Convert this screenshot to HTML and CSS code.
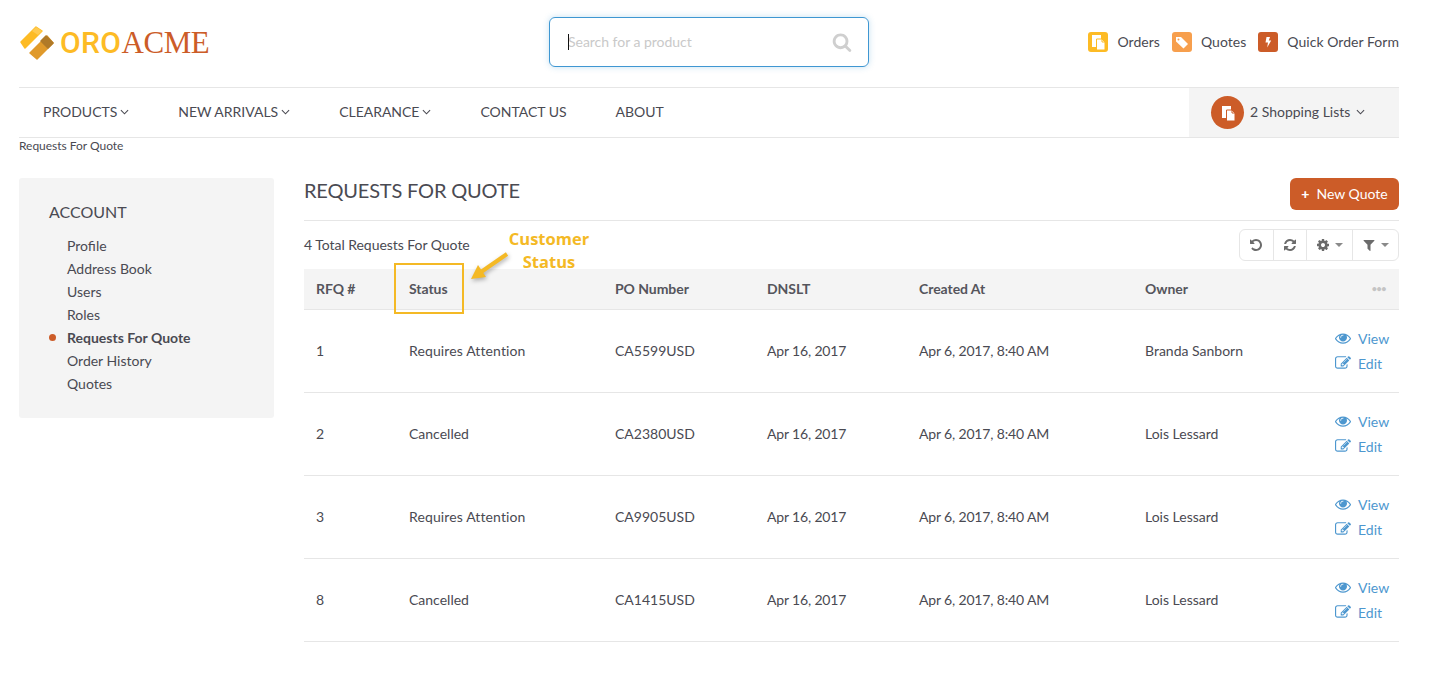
FILE: index.html
```html
<!DOCTYPE html>
<html lang="en">
<head>
<meta charset="utf-8">
<title>Requests For Quote</title>
<link rel="stylesheet" href="styles.css">
</head>
<body>
<svg class="defs" aria-hidden="true">
  <symbol id="i-search" viewBox="0 0 1792 1792"><path d="M1216 832q0-185-131.5-316.5t-316.5-131.5-316.5 131.5-131.5 316.5 131.5 316.5 316.5 131.5 316.5-131.5 131.5-316.5zm512 832q0 52-38 90t-90 38q-54 0-90-38l-343-342q-179 124-399 124-143 0-273.5-55.5t-225-150-150-225-55.5-273.5 55.5-273.5 150-225 225-150 273.5-55.5 273.5 55.5 225 150 150 225 55.5 273.5q0 220-124 399l343 343q37 37 37 90z"/></symbol>
  <symbol id="i-undo" viewBox="0 0 1792 1792"><path d="M1664 896q0 156-61 298t-164 245-245 164-298 61q-172 0-327-72.5t-264-204.5q-7-10-6.5-22.5t8.5-20.5l137-138q10-9 25-9 16 2 23 12 73 95 179 147t225 52q104 0 198.5-40.5t163.5-109.5 109.5-163.5 40.5-198.5-40.5-198.5-109.5-163.5-163.5-109.5-198.5-40.5q-98 0-188 35.5t-160 101.5l137 138q31 30 14 69-17 40-59 40h-448q-26 0-45-19t-19-45v-448q0-42 40-59 39-17 69 14l130 129q107-101 244.5-156.5t284.5-55.5q156 0 298 61t245 164 164 245 61 298z"/></symbol>
  <symbol id="i-refresh" viewBox="0 0 1792 1792"><path d="M1639 1056q0 5-1 7-64 268-268 434.5t-478 166.5q-146 0-282.5-55t-243.5-157l-129 129q-19 19-45 19t-45-19-19-45v-448q0-26 19-45t45-19h448q26 0 45 19t19 45-19 45l-137 137q71 66 161 102t187 36q134 0 250-65t186-179q11-17 53-117 8-23 30-23h192q13 0 22.5 9.5t9.5 22.5zm25-800v448q0 26-19 45t-45 19h-448q-26 0-45-19t-19-45 19-45l138-138q-148-137-349-137-134 0-250 65t-186 179q-11 17-53 117-8 23-30 23h-199q-13 0-22.5-9.5t-9.5-22.5v-7q65-268 270-434.5t480-166.5q146 0 284 55.5t245 156.5l130-129q19-19 45-19t45 19 19 45z"/></symbol>
  <symbol id="i-cog" viewBox="0 0 1792 1792"><path d="M1152 896q0-106-75-181t-181-75-181 75-75 181 75 181 181 75 181-75 75-181zm512-109v222q0 12-8 23t-20 13l-185 28q-19 54-39 91 35 50 107 138 10 12 10 25t-9 23q-27 37-99 108t-94 71q-12 0-26-9l-138-108q-44 23-91 38-16 136-29 186-7 28-36 28h-222q-14 0-24.5-8.5t-11.5-21.5l-28-184q-49-16-90-37l-141 107q-10 9-25 9-14 0-25-11-126-114-165-168-7-10-7-23 0-12 8-23 15-21 51-66.5t54-70.5q-27-50-41-99l-183-27q-13-2-21-12.5t-8-23.5v-222q0-12 8-23t19-13l186-28q14-46 39-92-40-57-107-138-10-12-10-24 0-10 9-23 26-36 98.5-107.5t94.5-71.5q13 0 26 10l138 107q44-23 91-38 16-136 29-186 7-28 36-28h222q14 0 24.5 8.5t11.5 21.5l28 184q49 16 90 37l142-107q9-9 24-9 13 0 25 10 129 119 165 170 7 8 7 22 0 12-8 23-15 21-51 66.5t-54 70.5q26 50 41 98l183 28q13 2 21 12.5t8 23.5z"/></symbol>
  <symbol id="i-filter" viewBox="0 0 1792 1792"><path d="M1595 295q17 41-14 70l-493 493v742q0 42-39 59-13 5-25 5-27 0-45-19l-256-256q-19-19-19-45v-486l-493-493q-31-29-14-70 17-39 59-39h1280q42 0 59 39z"/></symbol>
  <symbol id="i-eye" viewBox="0 0 1792 1792"><path d="M1664 960q-152-236-381-353 61 104 61 225 0 185-131.5 316.5t-316.5 131.5-316.5-131.5-131.5-316.5q0-121 61-225-229 117-381 353 133 205 333.5 326.5t434.5 121.5 434.5-121.5 333.5-326.5zm-720-384q0-20-14-34t-34-14q-125 0-214.5 89.5t-89.5 214.5q0 20 14 34t34 14 34-14 14-34q0-86 61-147t147-61q20 0 34-14t14-34zm848 384q0 34-20 69-140 230-376.5 368.5t-499.5 138.5-499.5-139-376.5-368q-20-35-20-69t20-69q140-229 376.5-368t499.5-139 499.5 139 376.5 368q20 35 20 69z"/></symbol>
  <symbol id="i-edit" viewBox="0 0 1792 1792"><path d="M888 1184l116-116-152-152-116 116v56h96v96h56zm440-720q-16-16-33 1l-350 350q-17 17-1 33t33-1l350-350q17-17 1-33zm80 594v190q0 119-84.5 203.5t-203.5 84.5h-832q-119 0-203.5-84.5t-84.5-203.5v-832q0-119 84.5-203.5t203.5-84.5h832q63 0 117 25 15 7 18 23 3 17-9 29l-49 49q-14 14-32 8-23-6-45-6h-832q-66 0-113 47t-47 113v832q0 66 47 113t113 47h832q66 0 113-47t47-113v-126q0-13 9-22l64-64q15-15 35-7t20 29zm-96-738l288 288-672 672h-288v-288zm444 132l-92 92-288-288 92-92q28-28 68-28t68 28l152 152q28 28 28 68t-28 68z"/></symbol>
  <symbol id="i-docs" viewBox="0 0 20 20"><path d="M4 3h9v12H4z"/><path d="M8.500 7H14l3 3v8H8.500z" stroke="currentColor" stroke-width="1"/><path d="M14 7v3h3" fill="none" stroke="currentColor" stroke-width="1"/></symbol>
  <symbol id="i-chev" viewBox="0 0 10 6"><path d="M1 1l4 4 4-4" fill="none" stroke="currentColor" stroke-width="1.200"/></symbol>
</svg>

<div class="page">
  <header class="top">
    <a class="logo" href="#">
      <svg class="logo-mark" viewBox="0 0 36 36" aria-hidden="true">
        <g stroke-linejoin="round" stroke-width="1.500">
          <path d="M11 28L28 11l6 7-16 16z" fill="#e09a2b" stroke="#e09a2b"/>
          <path d="M27 11l7 7-5 5-7-7z" fill="#b07a28" stroke="#b07a28"/>
          <path d="M17 2L2 17l4 6L23 6z" fill="#fdbb25" stroke="#fdbb25"/>
          <path d="M17 2l6 4-4 4-6-4z" fill="#ffca50"/>
        </g>
      </svg>
      <span class="logo-text"><span class="logo-oro">ORO</span><span class="logo-acme">ACME</span></span>
    </a>
    <form class="search">
      <span class="caret"></span>
      <span class="search-ph">Search for a product</span>
      <svg class="search-icon"><use href="#i-search"/></svg>
    </form>
    <nav class="quick">
      <a class="quick-link" href="#"><span class="q-icon q-yellow"><svg viewBox="0 0 20 20"><use href="#i-docs"/></svg></span>Orders</a>
      <a class="quick-link" href="#"><span class="q-icon q-peach"><svg viewBox="0 0 20 20"><path d="M4 5h5l7 7-4.500 4.500-7.500-7z"/><circle cx="6.500" cy="7.500" r="1" fill="#f79f4d"/></svg></span>Quotes</a>
      <a class="quick-link" href="#"><span class="q-icon q-rust"><svg viewBox="0 0 20 20"><path d="M8.500 5h3.500l-1.200 3.500h2.400l-4 7 .8-5H7.500z"/></svg></span>Quick Order Form</a>
    </nav>
  </header>

  <nav class="mainnav">
    <ul class="menu">
      <li class="menu-item">Products<svg class="chev"><use href="#i-chev"/></svg></li>
      <li class="menu-item">New Arrivals<svg class="chev"><use href="#i-chev"/></svg></li>
      <li class="menu-item">Clearance<svg class="chev"><use href="#i-chev"/></svg></li>
      <li class="menu-item">Contact Us</li>
      <li class="menu-item">About</li>
    </ul>
    <div class="lists">
      <span class="lists-badge"><svg viewBox="0 0 20 20"><use href="#i-docs"/></svg></span>
      <span>2 Shopping Lists</span>
      <svg class="chev chev-lists"><use href="#i-chev"/></svg>
    </div>
  </nav>

  <div class="crumb">Requests For Quote</div>

  <div class="layout">
    <aside class="side">
      <h3 class="side-title">Account</h3>
      <ul class="side-list">
        <li>Profile</li>
        <li>Address Book</li>
        <li>Users</li>
        <li>Roles</li>
        <li class="active">Requests For Quote</li>
        <li>Order History</li>
        <li>Quotes</li>
      </ul>
    </aside>

    <main class="content">
      <div class="title-row">
        <h1 class="title">Requests For Quote</h1>
        <a class="btn-new" href="#"><span class="plus">+</span>New Quote</a>
      </div>
      <div class="tools-row">
        <span class="total">4 Total Requests For Quote</span>
        <div class="tools">
          <span class="tool t-a"><svg class="ti"><use href="#i-undo"/></svg></span>
          <span class="tool t-a"><svg class="ti"><use href="#i-refresh"/></svg></span>
          <span class="tool t-b"><svg class="ti"><use href="#i-cog"/></svg><i class="drop"></i></span>
          <span class="tool t-c"><svg class="ti"><use href="#i-filter"/></svg><i class="drop"></i></span>
        </div>
      </div>

      <table class="grid">
        <colgroup>
          <col class="c1"><col class="c2"><col class="c3"><col class="c4"><col class="c5"><col class="c6"><col class="c7">
        </colgroup>
        <thead>
          <tr><th>RFQ #</th><th>Status</th><th>PO Number</th><th>DNSLT</th><th>Created At</th><th>Owner</th><th class="dots">&#8226;&#8226;&#8226;</th></tr>
        </thead>
        <tbody>
          <tr><td>1</td><td class="wide">Requires Attention</td><td>CA5599USD</td><td class="date">Apr 16, 2017</td><td class="date">Apr 6, 2017, 8:40 AM</td><td>Branda Sanborn</td>
            <td class="acts"><a class="act"><svg class="ai"><use href="#i-eye"/></svg>View</a><a class="act"><svg class="ai"><use href="#i-edit"/></svg>Edit</a></td></tr>
          <tr><td>2</td><td>Cancelled</td><td>CA2380USD</td><td class="date">Apr 16, 2017</td><td class="date">Apr 6, 2017, 8:40 AM</td><td>Lois Lessard</td>
            <td class="acts"><a class="act"><svg class="ai"><use href="#i-eye"/></svg>View</a><a class="act"><svg class="ai"><use href="#i-edit"/></svg>Edit</a></td></tr>
          <tr><td>3</td><td class="wide">Requires Attention</td><td>CA9905USD</td><td class="date">Apr 16, 2017</td><td class="date">Apr 6, 2017, 8:40 AM</td><td>Lois Lessard</td>
            <td class="acts"><a class="act"><svg class="ai"><use href="#i-eye"/></svg>View</a><a class="act"><svg class="ai"><use href="#i-edit"/></svg>Edit</a></td></tr>
          <tr><td>8</td><td>Cancelled</td><td>CA1415USD</td><td class="date">Apr 16, 2017</td><td class="date">Apr 6, 2017, 8:40 AM</td><td>Lois Lessard</td>
            <td class="acts"><a class="act"><svg class="ai"><use href="#i-eye"/></svg>View</a><a class="act"><svg class="ai"><use href="#i-edit"/></svg>Edit</a></td></tr>
        </tbody>
      </table>

      <div class="note">
        <div class="note-box"></div>
        <div class="note-text">Customer<br>Status</div>
        <svg class="note-arrow" viewBox="0 0 44 36" aria-hidden="true">
          <path d="M39 4L13 22" fill="none" stroke="#f4b925" stroke-width="4"/>
          <path d="M3 29l7-14 8 12z" fill="#f4b925"/>
        </svg>
      </div>
    </main>
  </div>
</div>
</body>
</html>
```

FILE: styles.css
```css
* { box-sizing: border-box; }
html, body { margin: 0; padding: 0; }
body {
  background: #fff;
  color: #4a4a52;
  font-family: Lato, "Liberation Sans", sans-serif;
  font-size: 14px;
  line-height: 20px;
  overflow: hidden;
}
a { color: inherit; text-decoration: none; }
ul { list-style: none; margin: 0; padding: 0; }
.defs { position: absolute; width: 0; height: 0; }
.page { width: 1380px; margin-left: 19px; }

/* header */
.top {
  height: 88px;
  border-bottom: 1px solid #e6e6e6;
  display: grid;
  grid-template-columns: 530px 320px 1fr;
  align-items: center;
}
.logo { display: flex; align-items: center; gap: 5px; margin-top: -2px; }
.logo-mark { width: 36px; height: 36px; display: block; }
.logo-text { font-size: 31px; line-height: 36px; display: flex; align-items: baseline; }
.logo-oro { color: #fdbb25; font-family: Roboto, sans-serif; font-size: 30px; font-weight: 500; letter-spacing: .4px; }
.logo-acme { color: #cc5c28; font-family: "Liberation Serif", serif; letter-spacing: -.4px; }

.search {
  position: relative;
  height: 50px;
  margin-top: -4px;
  border: 1px solid #3f97d2;
  border-radius: 6px;
  box-shadow: 0 0 6px rgba(63, 151, 210, .3);
  display: flex;
  align-items: center;
  padding: 0 16px 0 18px;
  justify-content: space-between;
}
.caret { position: absolute; left: 18px; top: 16px; width: 1px; height: 16px; background: #111; }
.search-ph { color: #c9c9c9; letter-spacing: -.03px; }
.search-icon { width: 20px; height: 20px; fill: #cfcfcf; }

.quick { display: flex; justify-content: flex-end; gap: 12px; margin-top: -4px; letter-spacing: .04px; }
.quick-link { display: flex; align-items: center; gap: 9px; }
.q-icon { width: 20px; height: 20px; border-radius: 3px; display: block; }
.q-icon svg { width: 20px; height: 20px; fill: #fff; display: block; }
.q-yellow { background: #fdbb25; color: #fdbb25; }
.q-peach { background: #f79f4d; }
.q-rust { background: #cc5c28; }

/* nav */
.mainnav {
  height: 50px;
  border-bottom: 1px solid #e6e6e6;
  display: flex;
  justify-content: space-between;
  line-height: 18px;
}
.menu { display: flex; padding-left: 24px; gap: 49px; align-items: flex-start; padding-top: 15px; letter-spacing: -.02px; }
.menu-item { text-transform: uppercase; display: flex; align-items: center; gap: 3px; }
.chev { width: 9px; height: 6px; color: #4a4a52; }
.lists {
  width: 210px;
  background: #f4f4f4;
  display: flex;
  align-items: center;
  padding-left: 22px;
  padding-bottom: 1px;
}
.lists-badge { width: 33px; height: 33px; border-radius: 50%; background: #cc5c28; color: #cc5c28; margin-right: 6px; display: flex; align-items: center; justify-content: center; margin-top: 1px; }
.lists-badge svg { width: 20px; height: 20px; fill: #fff; }
.chev-lists { margin-left: 6px; }

.crumb { font-size: 12px; line-height: 16px; height: 40px; letter-spacing: -.02px; }

/* layout */
.layout { display: flex; gap: 30px; align-items: flex-start; }
.side { width: 255px; height: 240px; background: #f4f4f4; border-radius: 3px; padding: 24px 30px 0; }
.side-title { font-size: 16px; font-weight: 400; line-height: 20px; margin: 0 0 12px; text-transform: uppercase; letter-spacing: -.02px; }
.side-list li { line-height: 23px; padding-left: 18px; position: relative; }
.side-list .active { font-weight: 700; }
.side-list .active::before {
  content: "";
  position: absolute;
  left: 0;
  top: 8px;
  width: 7px;
  height: 7px;
  border-radius: 50%;
  background: #cc5c28;
}

.content { width: 1095px; position: relative; }
.title-row { height: 43px; border-bottom: 1px solid #e6e6e6; display: flex; justify-content: space-between; align-items: flex-start; }
.title { font-size: 20px; line-height: 24px; font-weight: 400; margin: 0; text-transform: uppercase; letter-spacing: -.17px; }
.btn-new {
  width: 109px;
  height: 32px;
  background: #cc5c28;
  border-radius: 6px;
  color: #fff;
  display: flex;
  align-items: center;
  justify-content: center;
  gap: 7px;
}
.plus { font-weight: 900; font-size: 14px; }

.tools-row { height: 48px; display: flex; justify-content: space-between; align-items: flex-start; padding-top: 8px; }
.total { line-height: 32px; letter-spacing: -.04px; }
.tools { display: flex; height: 32px; border: 1px solid #e6e6e6; border-radius: 6px; width: 160px; }
.tool { display: flex; align-items: center; justify-content: center; gap: 5px; border-left: 1px solid #e6e6e6; height: 100%; }
.tool:first-child { border-left: 0; }
.t-a { width: 33px; }
.t-b { width: 47px; }
.t-c { width: 46px; }
.ti { width: 14px; height: 14px; fill: #6b6b6b; }
.drop { width: 0; height: 0; border-left: 4px solid transparent; border-right: 4px solid transparent; border-top: 4px solid #8a8a8a; }

/* table */
.grid { width: 100%; border-collapse: collapse; table-layout: fixed; }
.c1 { width: 93px; }
.c2 { width: 206px; }
.c3, .c4 { width: 152px; }
.c5 { width: 226px; }
.c6 { width: 170px; }
.c7 { width: 96px; }
.grid th {
  height: 40px;
  background: #f4f4f4;
  border-bottom: 1px solid #e6e6e6;
  text-align: left;
  font-weight: 700;
  padding: 0 12px;
  color: #55555c;
  letter-spacing: -.05px;
}
.grid td { height: 83px; border-bottom: 1px solid #e6e6e6; padding: 0 12px; vertical-align: middle; }
.grid td.wide { letter-spacing: .12px; }
.grid td.date { letter-spacing: -.16px; }
.grid th.dots { color: #c4c4c4; text-align: right; font-size: 9px; letter-spacing: -.5px; padding-right: 13px; }
.grid td.acts { padding: 0 0 0 32px; }
.act { display: flex; align-items: center; color: #4d97cf; line-height: 25px; gap: 7px; }
.ai { width: 16px; height: 16px; fill: #4d97cf; }

/* annotation overlay */
.note { position: absolute; left: 0; top: 0; width: 0; height: 0; }
.note-box { position: absolute; left: 90px; top: 85px; width: 70px; height: 51px; border: 2px solid #f4b925; }
.note-text {
  position: absolute;
  left: 190px;
  top: 49px;
  width: 110px;
  text-align: center;
  color: #f4b925;
  font-family: "Open Sans", sans-serif;
  font-weight: 700;
  font-size: 16.500px;
  line-height: 23px;
}
.note-arrow { position: absolute; left: 164px; top: 72px; width: 44px; height: 36px; filter: drop-shadow(1px 2px 2px rgba(0,0,0,.3)); }
```
